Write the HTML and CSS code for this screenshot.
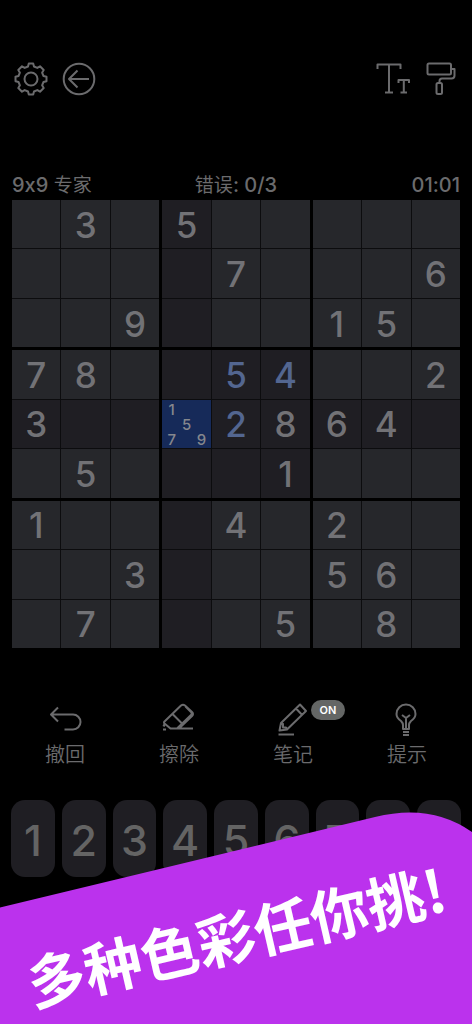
FILE: index.html
```html
<!DOCTYPE html>
<html lang="zh-CN">
<head>
<meta charset="utf-8">
<meta name="viewport" content="width=device-width, initial-scale=1">
<title>数独</title>
<link rel="stylesheet" href="styles.css">
</head>
<body>
<div class="app">
  <header class="topbar">
    <div class="group">
      <button class="icon-btn" aria-label="设置">
        <svg width="34" height="34" viewBox="0 0 34 34"><path d="M14 4.500 14.800 1.500H19.200L20 4.500 23.300 5.900 26 4.300 29.700 8 28.100 10.700 29.500 14 32.500 14.800V19.200L29.500 20 28.100 23.300 29.700 26 26 29.700 23.300 28.100 20 29.500 19.200 32.500H14.800L14 29.500 10.700 28.100 8 29.700 4.300 26 5.900 23.300 4.500 20 1.500 19.200V14.800L4.500 14 5.900 10.700 4.300 8 8 4.300 10.700 5.900Z"/><circle cx="17" cy="17" r="6.500"/></svg>
      </button>
      <button class="icon-btn" aria-label="返回">
        <svg width="34" height="34" viewBox="0 0 34 34"><circle cx="17" cy="17" r="15.300"/><path d="M27 17H7M15.500 8.500 7 17l8.500 8.500"/></svg>
      </button>
    </div>
    <div class="group">
      <button class="icon-btn" aria-label="字号">
        <svg width="34" height="34" viewBox="0 0 34 34"><path d="M1.500 7V2.500H24.500V7M13 2.500V30.500M9 30.500h8M22.500 21v-3H33v3M27.800 18v12.500M24.500 30.500h6.500"/></svg>
      </button>
      <button class="icon-btn" aria-label="主题">
        <svg width="34" height="34" viewBox="0 0 34 34"><rect x="3.500" y="1.500" width="23.500" height="11" rx="1.500"/><path d="M27 7h3.500v6.500a3 3 0 0 1-3 3H18a2.500 2.500 0 0 0-2.500 2.500v2"/><rect x="12.500" y="21" width="5.500" height="11" rx="1.500"/></svg>
      </button>
    </div>
  </header>

  <div class="status">
    <span>9x9 <span class="word">专家</span></span>
    <span><span class="word">错误</span>: 0/3</span>
    <span class="time">01:01</span>
  </div>

  <main class="board" id="board" aria-label="数独"></main>

  <div class="tools">
    <button class="tool">
      <svg width="34" height="34" viewBox="0 0 34 34"><path d="M10 5.500 3 12.500l7 7M3 12.500H25a7.500 7.500 0 0 1 0 15H16.500"/></svg>
      <span>撤回</span>
    </button>
    <button class="tool">
      <svg width="34" height="34" viewBox="0 0 34 34"><path d="M2.500 19.500 19 3.500q2-1.500 4 0l7 6.500q2 2 0 4L17 26.500H8.500L2.500 21.500Q1.500 20.500 2.500 19.500ZM10.500 12 21 22.500M23.500 4.500 29 10q1.500 1.500 0 3L15 26.500M8.500 26.500H31M1 23l2 1M1 27.500h3"/></svg>
      <span>擦除</span>
    </button>
    <button class="tool">
      <svg width="34" height="34" viewBox="0 0 34 34"><path d="M3.500 28.500 5 21 24 2.500 30 9 11 27.500ZM20 6.500l6.200 6.500M5 21l2 1v3.500h3l1 2M2.500 32.500H18"/></svg>
      <span>笔记</span>
      <span class="badge">ON</span>
    </button>
    <button class="tool">
      <svg width="34" height="34" viewBox="0 0 34 34"><path d="M13 27v-4q0-2-2-4Q6.500 16 6.500 12a9.500 9.500 0 0 1 19 0q0 4-4.500 7-2 2-2 4v4ZM16 27V15M12 13l4 3 4-3M13 30h6M13 33h6"/></svg>
      <span>提示</span>
    </button>
  </div>

  <div class="keypad">
    <button>1</button><button>2</button><button>3</button><button>4</button><button>5</button><button>6</button><button>7</button><button>8</button><button>9</button>
  </div>

  <div class="banner">
    <svg class="banner-shape" viewBox="0 0 472 212" preserveAspectRatio="none" aria-hidden="true"><path d="M0 95.500 375 5Q431-9 472 20V212H0Z"/></svg>
    <p>多种色彩任你挑!</p>
  </div>
</div>
<script src="board.js"></script>
</body>
</html>
```

FILE: styles.css
```css
* { box-sizing: border-box; }

body {
  margin: 0;
  background: #000;
  color: #6b6b6d;
  font-family: Inter, "Noto Sans CJK SC", sans-serif;
  font-feature-settings: "calt" 0;
}

button {
  margin: 0;
  padding: 0;
  border: 0;
  background: none;
  color: inherit;
  font: inherit;
  font-feature-settings: inherit;
}

svg {
  display: block;
  fill: none;
  stroke: #6b6b6d;
  stroke-width: 2;
  stroke-linejoin: round;
}

.app {
  position: relative;
  min-height: 100vh;
  overflow: hidden;
  padding-top: 62px;
}

.topbar {
  display: flex;
  justify-content: space-between;
  padding: 0 14px;
}

.group {
  display: flex;
  gap: 14px;
}

.status {
  display: grid;
  grid-template-columns: 1fr auto 1fr;
  margin-top: 75px;
  padding: 0 12px;
  font-size: 20px;
  line-height: 28px;
  font-weight: 500;
}

.word {
  font-size: 19px;
  font-weight: 400;
}

.time { text-align: right; }

.board {
  display: grid;
  grid-template-columns: repeat(3, 1fr);
  gap: 3px;
  margin: 0 12px;
}

.block {
  display: grid;
  grid-template-columns: repeat(3, 1fr);
  grid-template-rows: repeat(3, 1fr);
  gap: 1px;
  aspect-ratio: 1;
  background: #0c0c0e;
}

.cell {
  display: grid;
  place-items: center;
  min-width: 0;
  min-height: 0;
  padding-top: 2px;
  background: #26272b;
  color: #727276;
  font-size: 35px;
  line-height: 1;
  font-weight: 500;
}

.cell.lit { background: #1f1e23; }
.cell.mine { color: #536690; }

.cell.selected {
  grid-template-columns: repeat(3, 1fr);
  grid-template-rows: repeat(3, 1fr);
  padding: 2px;
  background: #162a59;
  color: #85878d;
  font-size: 15px;
}

.tools {
  display: grid;
  grid-template-columns: repeat(4, 1fr);
  margin-top: 54px;
  padding: 0 8px;
}

.tool {
  position: relative;
  display: flex;
  flex-direction: column;
  align-items: center;
  gap: 4px;
  font-size: 20px;
  font-weight: 350;
  line-height: 30px;
}

.tool svg { stroke-width: 2; }

.badge {
  position: absolute;
  top: -2px;
  left: calc(50% + 18px);
  width: 34px;
  border-radius: 10px;
  background: #646665;
  color: #fff;
  font-size: 11px;
  font-weight: 600;
  line-height: 20px;
}

.keypad {
  display: grid;
  grid-template-columns: repeat(9, 1fr);
  gap: 7px;
  margin-top: 30px;
  padding: 0 11px;
}

.keypad button {
  height: 77px;
  padding-top: 3px;
  border-radius: 14px;
  background: #1f1e23;
  color: #646464;
  font-size: 43px;
  font-weight: 500;
}

.banner {
  position: absolute;
  right: 0;
  bottom: 0;
  left: 0;
  display: flex;
  justify-content: center;
  height: 212px;
  padding-top: 92px;
}

.banner-shape {
  position: absolute;
  inset: 0;
  width: 100%;
  height: 100%;
  fill: #bb32ed;
  stroke: none;
}

.banner p {
  position: relative;
  margin: 0;
  color: #fff;
  font-family: "Noto Sans CJK SC", sans-serif;
  font-size: 58px;
  font-weight: 700;
  line-height: 60px;
  height: 60px;
  white-space: nowrap;
  transform: rotate(-13deg);
}
```

FILE: board.js
```js
const rows = [
  ".3.5.....",
  "....7...6",
  "..9...15.",
  "78..54..2",
  "3...2864.",
  ".5...1...",
  "1...4.2..",
  "..3...56.",
  ".7...5.8."
];
const mine = ["3,4", "3,5", "4,4"];
const notes = ["1", "", "", "", "5", "", "7", "", "9"];
const selected = { row: 4, col: 3 };
const board = document.getElementById("board");

for (let b = 0; b < 9; b++) {
  const block = document.createElement("div");
  block.className = "block";
  for (let i = 0; i < 9; i++) {
    const r = Math.floor(b / 3) * 3 + Math.floor(i / 3);
    const c = (b % 3) * 3 + (i % 3);
    const cell = document.createElement("button");
    cell.className = "cell";
    if (r === selected.row || c === selected.col || b === 4) cell.classList.add("lit");
    if (mine.includes(r + "," + c)) cell.classList.add("mine");
    if (r === selected.row && c === selected.col) {
      cell.classList.add("selected");
      for (const n of notes) {
        const note = document.createElement("span");
        note.textContent = n;
        cell.append(note);
      }
    } else if (rows[r][c] !== ".") {
      cell.textContent = rows[r][c];
    }
    block.append(cell);
  }
  board.append(block);
}
```
